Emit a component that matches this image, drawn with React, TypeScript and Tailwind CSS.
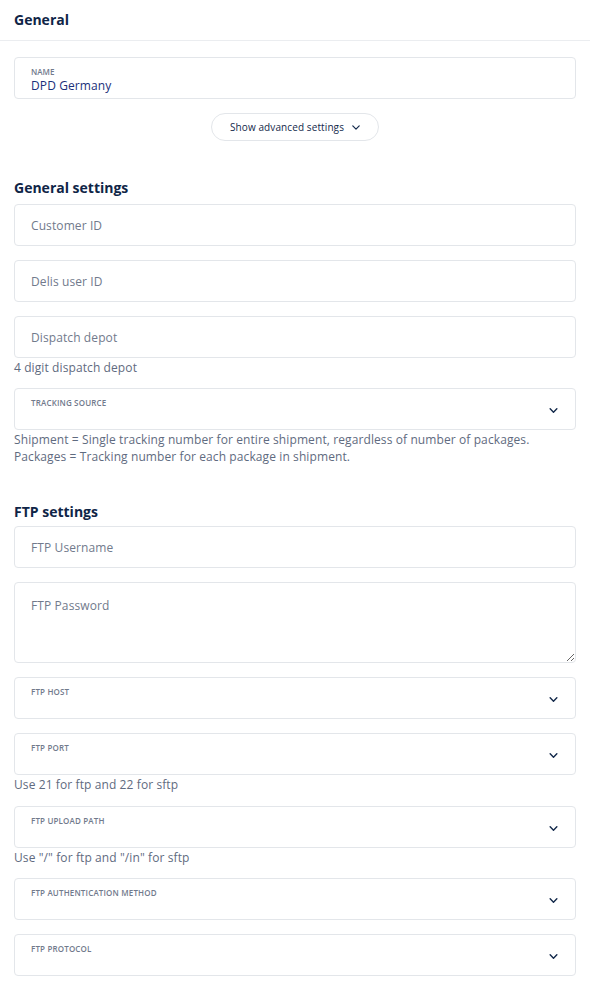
import React from "react";

const font = { fontFamily: '"Open Sans", "Liberation Sans", sans-serif' };

function Chevron() {
  return (
    <svg width="9" height="5" viewBox="0 0 10 6" fill="none" className="text-[#13294b]">
      <path d="M1 1l4 4 4-4" stroke="currentColor" strokeWidth="1.7" strokeLinecap="round" strokeLinejoin="round" />
    </svg>
  );
}

function TextField({ placeholder }: { placeholder: string }) {
  return (
    <input
      placeholder={placeholder}
      className="h-[42px] w-full rounded-[4px] border border-[#e3e6ea] bg-white px-4 text-[12px] tracking-[0.1px] text-[#13294b] outline-none placeholder:text-[#717a8c]"
    />
  );
}

function SelectField({ label }: { label: string }) {
  return (
    <div className="relative h-[42px] w-full rounded-[4px] border border-[#e3e6ea] bg-white">
      <span className="absolute left-4 top-[8px] text-[8px] font-semibold uppercase tracking-[0.02em] text-[#717a8c]">
        {label}
      </span>
      <span className="absolute right-[17px] top-[19px] flex">
        <Chevron />
      </span>
    </div>
  );
}

function Help({ children }: { children: React.ReactNode }) {
  return <p className="text-[12px] leading-[17px] tracking-[0.1px] text-[#5f6b80]">{children}</p>;
}

function Heading({ children }: { children: React.ReactNode }) {
  return <h2 className="text-[14px] font-bold leading-[20px] text-[#0f2547]">{children}</h2>;
}

export default function App() {
  return (
    <div className="min-h-[1002px] w-[590px] bg-white" style={font}>
      <div className="flex h-[41px] items-center border-b border-[#ebedf0] px-[14px]">
        <Heading>General</Heading>
      </div>

      <div className="px-[14px] pt-[16px]">
        <div className="h-[42px] w-full rounded-[4px] border border-[#e3e6ea] px-4 pt-[8px]">
          <div className="text-[8px] font-semibold uppercase leading-[11px] text-[#717a8c]">Name</div>
          <div className="text-[12px] leading-[17px] tracking-[0.1px] text-[#1a2f7a]">DPD Germany</div>
        </div>

        <div className="mt-[14px] flex justify-center">
          <button className="flex h-[28px] items-center gap-[8px] rounded-full border border-[#e3e6ea] bg-white px-[18px] text-[10px] tracking-[0.1px] text-[#13294b]">
            Show advanced settings
            <svg width="8" height="5" viewBox="0 0 10 6" fill="none">
              <path d="M1 1l4 4 4-4" stroke="currentColor" strokeWidth="1.5" strokeLinecap="round" strokeLinejoin="round" />
            </svg>
          </button>
        </div>

        <div className="mt-[37px]">
          <Heading>General settings</Heading>
        </div>
        <div className="mt-[6px] flex flex-col">
          <TextField placeholder="Customer ID" />
          <div className="mt-[14px]">
            <TextField placeholder="Delis user ID" />
          </div>
          <div className="mt-[14px]">
            <TextField placeholder="Dispatch depot" />
          </div>
          <div className="mt-[1px]">
            <Help>4 digit dispatch depot</Help>
          </div>
          <div className="mt-[12px]">
            <SelectField label="Tracking source" />
          </div>
          <div className="mt-[1px]">
            <Help>Shipment = Single tracking number for entire shipment, regardless of number of packages.</Help>
            <Help>Packages = Tracking number for each package in shipment.</Help>
          </div>
        </div>

        <div className="mt-[37px]">
          <Heading>FTP settings</Heading>
        </div>
        <div className="mt-[4px] flex flex-col">
          <TextField placeholder="FTP Username" />
          <div className="mt-[14px]">
            <textarea
              placeholder="FTP Password"
              className="block h-[81px] w-full rounded-[4px] border border-[#e3e6ea] bg-white px-4 pt-[14px] text-[12px] tracking-[0.1px] text-[#13294b] outline-none placeholder:text-[#717a8c]"
            />
          </div>
          <div className="mt-[14px]">
            <SelectField label="FTP Host" />
          </div>
          <div className="mt-[14px]">
            <SelectField label="FTP Port" />
          </div>
          <div className="mt-[1px]">
            <Help>Use 21 for ftp and 22 for sftp</Help>
          </div>
          <div className="mt-[13px]">
            <SelectField label="FTP Upload path" />
          </div>
          <div className="mt-[1px]">
            <Help>Use "/" for ftp and "/in" for sftp</Help>
          </div>
          <div className="mt-[12px]">
            <SelectField label="FTP Authentication method" />
          </div>
          <div className="mt-[14px]">
            <SelectField label="FTP Protocol" />
          </div>
        </div>
      </div>
    </div>
  );
}
